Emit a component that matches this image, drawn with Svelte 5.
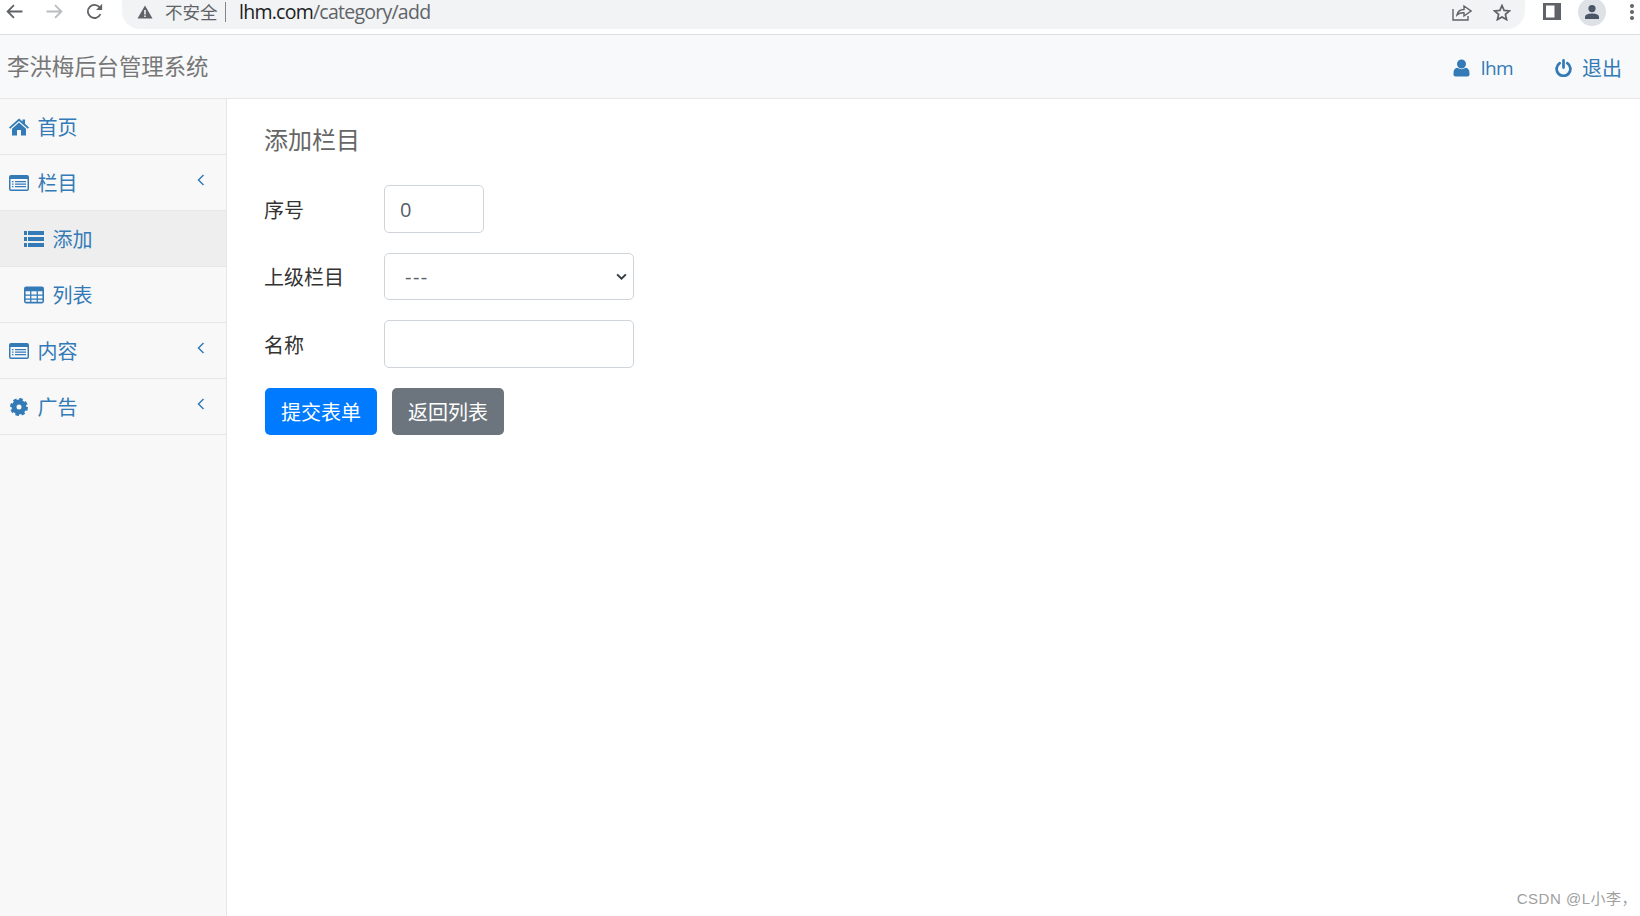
<script>
  const rows = [
    { icon: 'home', label: '首页' },
    { icon: 'listalt', label: '栏目', chevron: true },
    { icon: 'list', label: '添加', sub: true, active: true },
    { icon: 'table', label: '列表', sub: true },
    { icon: 'listalt', label: '内容', chevron: true },
    { icon: 'cog', label: '广告', chevron: true }
  ];
</script>

{#snippet icon(name)}
  {#if name === 'home'}
    <svg class="ic" viewBox="0 0 20 18"><path d="M10 0.5 L13.5 3.6 V1.5 H16 V5.8 L20 9.4 L18.8 10.7 L10 3 L1.2 10.7 L0 9.4 Z M10 4.6 L17 10.7 V17.5 H12 V12 H8 V17.5 H3 V10.7 Z" /></svg>
  {:else if name === 'listalt'}
    <svg class="ic" viewBox="0 0 20 16"><path fill-rule="evenodd" d="M2 0 H18 A2 2 0 0 1 20 2 V14 A2 2 0 0 1 18 16 H2 A2 2 0 0 1 0 14 V2 A2 2 0 0 1 2 0 Z M1.5 4 V14 Q1.5 14.5 2 14.5 H18 Q18.500 14.500 18.500 14 V4 Z M3 6 H4.500 V7.200 H3 Z M6 6 H17 V7.200 H6 Z M3 8.500 H4.500 V9.700 H3 Z M6 8.500 H17 V9.700 H6 Z M3 11 H4.500 V12.200 H3 Z M6 11 H17 V12.200 H6 Z" /></svg>
  {:else if name === 'list'}
    <svg class="ic" viewBox="0 0 20 16"><path d="M0 0 H3 V4 H0 Z M4 0 H20 V4 H4 Z M0 6 H3 V10 H0 Z M4 6 H20 V10 H4 Z M0 12 H3 V16 H0 Z M4 12 H20 V16 H4 Z" /></svg>
  {:else if name === 'table'}
    <svg class="ic" viewBox="0 0 19 16"><path fill-rule="evenodd" d="M2 0 H17 A2 2 0 0 1 19 2 V14 A2 2 0 0 1 17 16 H2 A2 2 0 0 1 0 14 V2 A2 2 0 0 1 2 0 Z M1.500 4.500 V7.500 H5.800 V4.500 Z M7 4.500 V7.500 H12 V4.500 Z M13.200 4.500 V7.500 H17.500 V4.500 Z M1.500 8.700 V11.300 H5.800 V8.700 Z M7 8.700 V11.300 H12 V8.700 Z M13.200 8.700 V11.300 H17.500 V8.700 Z M1.500 12.500 V14.500 H5.800 V12.500 Z M7 12.500 V14.500 H12 V12.500 Z M13.200 12.500 V14.500 H17.500 V12.500 Z" /></svg>
  {:else if name === 'cog'}
    <svg class="ic" viewBox="0 0 18 18">
      <circle cx="9" cy="9" r="5" fill="none" stroke="currentColor" stroke-width="5" />
      <circle cx="9" cy="9" r="7.600" fill="none" stroke="currentColor" stroke-width="2.800" stroke-dasharray="3.400 2.570" />
    </svg>
  {:else if name === 'user'}
    <svg class="ic" viewBox="0 0 16 18"><path d="M8 0.500 A4.500 4.500 0 1 1 8 9.500 A4.500 4.500 0 1 1 8 0.500 Z M3.800 8.800 Q8 11.500 12.200 8.800 Q16 9.500 16 14 V15.500 Q16 17.500 14 17.500 H2 Q0 17.500 0 15.500 V14 Q0 9.500 3.800 8.800 Z" /></svg>
  {:else if name === 'power'}
    <svg class="ic" viewBox="0 0 18 19"><path d="M5 4.400 A7.300 7.300 0 1 0 13 4.400 M9 1.500 V9" fill="none" stroke="currentColor" stroke-width="2.900" stroke-linecap="round" /></svg>
  {/if}
{/snippet}

<div class="page">
  <header class="chrome">
    <div class="nav-btns">
      <svg viewBox="0 0 16 14" class="cb"><path d="M15.500 7 H2 M7.500 1 L1.500 7 L7.500 13" fill="none" stroke="#5f6368" stroke-width="1.700" /></svg>
      <svg viewBox="0 0 16 14" class="cb dim"><path d="M0.500 7 H14 M8.500 1 L14.500 7 L8.500 13" fill="none" stroke="#babcbe" stroke-width="1.700" /></svg>
      <svg viewBox="0 0 16 16" class="cb reload"><path d="M13.600 10.500 A6.200 6.200 0 1 1 13 4.300" fill="none" stroke="#5f6368" stroke-width="1.700" /><path d="M15.200 0.800 V6.500 H9.500 Z" fill="#5f6368" /></svg>
    </div>
    <div class="omni">
      <svg viewBox="0 0 16 14" class="warn"><path d="M8 0.500 L15.500 13.500 H0.500 Z M7.200 5 V9.500 H8.800 V5 Z M7.200 10.500 V12 H8.800 V10.500 Z" fill="#5f6368" fill-rule="evenodd" /></svg>
      <span class="insecure">不安全</span>
      <span class="sep"></span>
      <span class="url"><b>lhm.com</b>/category/add</span>
      <span class="omni-right">
        <svg viewBox="0 0 20 18" class="share"><path d="M1 6 V17 H16 V13 M5 12 Q6 6.500 12 6.500 V3 L19 8 L12 13 V9.800 Q7.500 9.500 5 12 Z" fill="none" stroke="#5f6368" stroke-width="1.400" /></svg>
        <svg viewBox="0 0 18 17" class="star"><path d="M9 1.500 L11.100 6.400 L16.500 6.900 L12.400 10.400 L13.600 15.600 L9 12.900 L4.400 15.600 L5.600 10.400 L1.500 6.900 L6.900 6.400 Z" fill="none" stroke="#5f6368" stroke-width="1.700" /></svg>
      </span>
    </div>
    <div class="chrome-right">
      <svg viewBox="0 0 18 17" class="panel"><path fill-rule="evenodd" d="M0 0 H18 V17 H0 Z M3 2.500 V14.500 H11.500 V2.500 Z" fill="#5f6368" /></svg>
      <span class="avatar">
        <svg viewBox="0 0 16 14"><path d="M8 0 A3.600 3.600 0 1 1 8 7.200 A3.600 3.600 0 1 1 8 0 Z M1 14 V12 Q1 8.500 8 8.500 Q15 8.500 15 12 V14 Z" fill="#4a5568" /></svg>
      </span>
      <span class="dots"><i></i><i></i><i></i></span>
    </div>
  </header>

  <nav class="topbar">
    <span class="brand">李洪梅后台管理系统</span>
    <div class="top-links">
      <a class="top-link" href="#user">{@render icon('user')}<span class="uname">lhm</span></a>
      <a class="top-link out" href="#out">{@render icon('power')}<span>退出</span></a>
    </div>
  </nav>

  <div class="body">
    <aside class="side">
      {#each rows as r}
        <a href="#row" class="row" class:sub={r.sub} class:active={r.active}>
          <span class="icwrap">{@render icon(r.icon)}</span>
          <span class="lbl">{r.label}</span>
          {#if r.chevron}
            <svg class="chev" viewBox="0 0 8 12"><path d="M6.500 1 L1.500 6 L6.500 11" fill="none" stroke="currentColor" stroke-width="1.500" /></svg>
          {/if}
        </a>
      {/each}
    </aside>

    <main class="main">
      <h1>添加栏目</h1>
      <form>
        <div class="field">
          <label for="seq">序号</label>
          <input id="seq" class="ctl short" value="0" />
        </div>
        <div class="field">
          <label for="parent">上级栏目</label>
          <div class="selwrap">
            <select id="parent" class="ctl wide sel"><option>---</option></select>
            <svg class="selarrow" viewBox="0 0 12 8"><path d="M1 1.500 L6 6.500 L11 1.500" fill="none" stroke="#343a40" stroke-width="2.200" /></svg>
          </div>
        </div>
        <div class="field">
          <label for="name">名称</label>
          <input id="name" class="ctl wide" />
        </div>
        <div class="btns">
          <button type="button" class="btn primary">提交表单</button>
          <button type="button" class="btn secondary">返回列表</button>
        </div>
      </form>
    </main>
  </div>

  <div class="mark">CSDN @L小李，</div>
</div>

<style>
  :global(body) { margin: 0; background: #fff; overflow: hidden; }
  .page {
    position: relative;
    width: 1640px;
    height: 916px;
    display: flex;
    flex-direction: column;
    overflow: hidden;
    font-family: "Open Sans", "Noto Sans CJK SC", sans-serif;
    font-size: 20px;
    color: #333;
  }
  .chrome {
    height: 35px;
    box-sizing: border-box;
    flex: none;
    display: flex;
    background: #fff;
    border-bottom: 1px solid #dadce0;
  }
  .nav-btns { width: 122px; flex: none; display: flex; align-items: flex-start; gap: 23px; padding: 4px 0 0 6px; box-sizing: border-box; }
  .cb { width: 17px; height: 15px; flex: none; }
  .cb.reload { height: 17px; margin-top: -1px; }
  .omni {
    width: 1403px;
    height: 29px;
    flex: none;
    background: #f1f3f4;
    border-radius: 0 0 18px 18px;
    display: flex;
    align-items: flex-start;
    box-sizing: border-box;
    padding: 0 14px 0 15px;
    color: #5f6368;
  }
  .warn { width: 16px; height: 14px; margin-right: 12px; margin-top: 5px; flex: none; }
  .insecure { font-size: 17.500px; line-height: 24px; }
  .sep { width: 1.500px; height: 20px; background: #80868b; margin: 2px 13px 0 7px; }
  .url { font-size: 19.500px; line-height: 24px; letter-spacing: -0.750px; }
  .url b { font-weight: 400; color: #202124; }
  .omni-right { margin-left: auto; display: flex; align-items: center; gap: 21px; margin-top: 3px; }
  .share { width: 20px; height: 18px; }
  .star { width: 18px; height: 17px; }
  .chrome-right { flex: 1; display: flex; align-items: flex-start; padding: 3px 0 0 18px; }
  .panel { width: 18px; height: 17px; }
  .avatar {
    width: 28px; height: 28px; border-radius: 50%;
    background: #dee1e6; margin: -5px 0 0 17px;
    display: flex; align-items: center; justify-content: center;
  }
  .avatar svg { width: 16px; height: 14px; }
  .dots { display: flex; flex-direction: column; gap: 2px; margin: 1px 0 0 24px; }
  .dots i { width: 4px; height: 4px; border-radius: 50%; background: #5f6368; display: block; }

  .topbar {
    height: 64px;
    flex: none;
    box-sizing: border-box;
    display: flex;
    align-items: center;
    justify-content: space-between;
    padding: 0 18px 0 7px;
    background: #f8f9fa;
    border-bottom: 1px solid #e7e7e7;
  }
  .brand { font-size: 22.400px; color: #777; font-family: "Noto Sans CJK SC", sans-serif; margin-top: -3px; }
  .top-links { display: flex; gap: 42px; margin-top: 2px; }
  .top-link { display: flex; align-items: center; color: #337ab7; text-decoration: none; font-size: 20px; }
  .top-link :global(.ic) { width: 17px; height: 18px; margin-right: 11px; }
  .top-link.out :global(.ic) { margin-right: 10px; }
  .uname { font-size: 19px; letter-spacing: -0.600px; }

  .body { flex: 1; display: flex; min-height: 0; }
  .side { width: 227px; flex: none; box-sizing: border-box; background: #f8f8f8; border-right: 1px solid #e7e7e7; }
  .row {
    height: 56px;
    box-sizing: border-box;
    display: flex;
    align-items: center;
    padding: 0 21px 0 9px;
    border-bottom: 1px solid #e7e7e7;
    color: #337ab7;
    text-decoration: none;
    font-family: "Noto Sans CJK SC", sans-serif;
  }
  .row.sub { padding-left: 24px; }
  .row.active { background: #eee; }
  .icwrap { width: 20px; height: 20px; display: flex; align-items: center; justify-content: center; margin-right: 8.500px; }
  .icwrap :global(.ic) { width: 20px; height: 18px; }
  .lbl { line-height: 1; }
  .chev { width: 8px; height: 12px; margin: -6px 0 0 auto; }
  .ic { fill: currentColor; display: block; }

  .main { flex: 1; padding: 24px 0 0 37px; box-sizing: border-box; }
  h1 { margin: 0 0 30px; font-weight: 400; font-size: 24px; line-height: 32px; color: #666; font-family: "Noto Sans CJK SC", sans-serif; }
  .field { display: flex; align-items: center; margin-bottom: 20px; }
  label { width: 120px; flex: none; font-family: "Noto Sans CJK SC", sans-serif; color: #333; }
  .ctl {
    display: block;
    box-sizing: border-box;
    height: 48px;
    border: 1px solid #ced4da;
    border-radius: 5px;
    padding: 0 15px;
    font: inherit;
    color: #55606a;
    background: #fff;
  }
  .short { width: 100px; }
  .wide { width: 250px; }
  .selwrap { position: relative; }
  .sel { appearance: none; height: 47px; padding-left: 20px; letter-spacing: 1.500px; }
  .selarrow { position: absolute; right: 7px; top: 20px; width: 11px; height: 7px; pointer-events: none; }
  .btns { display: flex; gap: 15px; margin-left: 1px; }
  .btn {
    width: 112px;
    height: 47px;
    border: 0;
    border-radius: 5px;
    color: #fff;
    font-size: 20px;
    font-family: "Noto Sans CJK SC", sans-serif;
    padding: 0;
  }
  .primary { background: #007bff; }
  .secondary { background: #6c757d; }
  .mark {
    position: absolute;
    right: 3px;
    bottom: 8px;
    font-size: 15px;
    letter-spacing: 0.500px;
    color: #a0a0a0;
    font-family: "Liberation Sans", "Noto Sans CJK SC", sans-serif;
  }
</style>
